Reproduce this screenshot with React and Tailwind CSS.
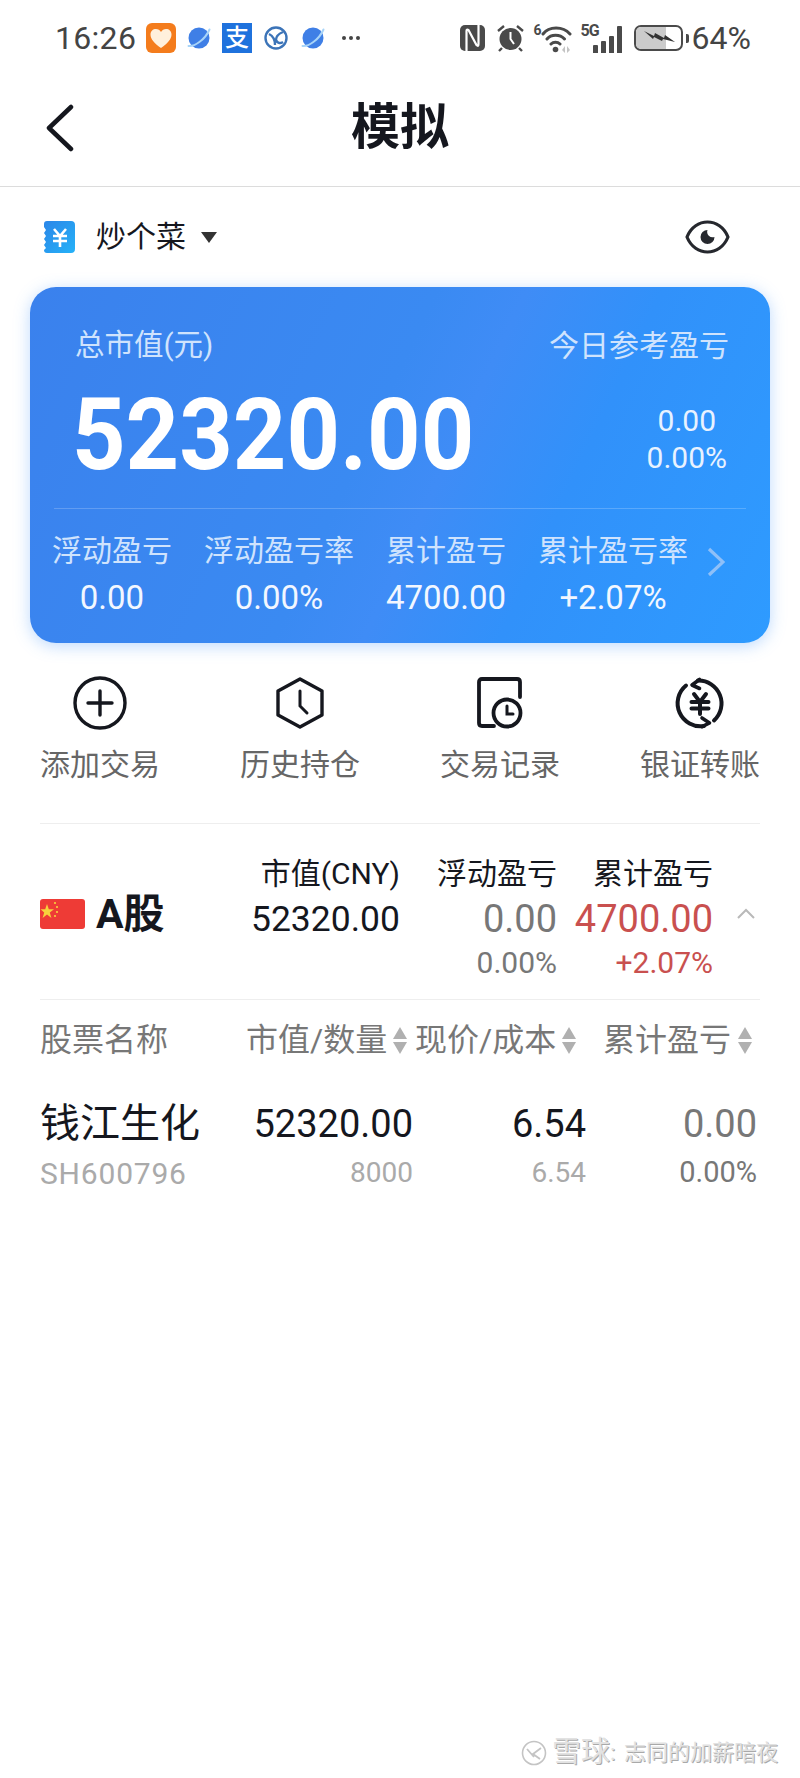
// App.jsx — simulated portfolio screen (模拟)
const INK = '#15171e'

function HeartApp() {
  return (
    <svg width="30" height="30" viewBox="0 0 30 30" className="ml-[10px]">
      <rect width="30" height="30" rx="6" fill="#f47c1c" />
      <path d="M15 25 C8 20 4.5 16 4.5 11.5 C4.5 8 7 6 10 6 C12 6 14 7 15 9 C16 7 18 6 20 6 C23 6 25.5 8 25.5 11.5 C25.5 16 22 20 15 25 Z" fill="#fff0dc" />
    </svg>
  )
}

function Planet({ className }) {
  return (
    <svg width="24" height="24" viewBox="0 0 24 24" className={className}>
      <circle cx="12" cy="12" r="10.5" fill="#3f7fe6" />
      <path d="M1.5 20 C7 21 18 14 22.5 3.5" stroke="#a8d4f8" strokeWidth="2" fill="none" strokeLinecap="round" />
    </svg>
  )
}

function Alipay() {
  return (
    <div className="ml-[11px] flex h-[30px] w-[30px] items-center justify-center bg-[#1f72dd] text-[24px] leading-none font-medium text-white">支</div>
  )
}

function RingLogo() {
  return (
    <svg width="26" height="26" viewBox="0 0 26 26" className="ml-[11px]">
      <circle cx="13" cy="13" r="10.5" fill="none" stroke="#3c74b8" strokeWidth="2.4" />
      <path d="M6 9 C10 11 12 15 12 20 M20 7 C15 9 13 12 13 15 C14 18 17 19 20 17" fill="none" stroke="#3c74b8" strokeWidth="2.4" />
    </svg>
  )
}

function StatusRight() {
  return (
    <div className="flex items-center">
      {/* nfc */}
      <svg width="25" height="26" viewBox="0 0 25 26">
        <rect width="25" height="26" rx="5" fill="#4a4a4a" />
        <path d="M6.5 26 V6 Q6.5 4 8.5 5 L16.5 20 Q18.5 22 18.5 19 V0" fill="none" stroke="#fff" strokeWidth="2.2" />
      </svg>
      {/* alarm */}
      <svg width="29" height="28" viewBox="0 0 29 28" className="ml-[11px]">
        <circle cx="14.5" cy="15" r="11" fill="#4a4a4a" />
        <path d="M14.5 8 V15 L18 20" stroke="#fff" strokeWidth="2" fill="none" />
        <path d="M2 7 L8 2 M27 7 L21 2 M6 24 L3 27 M23 24 L26 27" stroke="#4a4a4a" strokeWidth="2.4" />
      </svg>
      {/* wifi */}
      <div className="relative ml-[9px] h-[30px] w-[38px]">
        <span className="absolute top-0 left-0 text-[14px] leading-[14px] font-bold text-[#4a4a4a]">6</span>
        <svg width="38" height="30" viewBox="0 0 38 30">
          <path d="M9 11 C15 3 29 3 36 11 M13 16 C17 11 26 11 30.5 16 M17 21 C19.5 18.5 23.5 18.5 26 21" fill="none" stroke="#4a4a4a" strokeWidth="3" strokeLinecap="round" />
          <circle cx="21.5" cy="26.5" r="2.8" fill="#4a4a4a" />
          <path d="M28 27 L31 23 V30 Z M33 23 L36 27 L33 30 Z" fill="#c4c4c4" />
        </svg>
      </div>
      {/* 5g + signal */}
      <div className="relative ml-[9px] h-[30px] w-[41px]">
        <span className="absolute top-0 left-0 text-[16px] leading-[16px] font-bold tracking-[-1px] text-[#4a4a4a]">5G</span>
        <div className="absolute right-0 bottom-0 flex items-end gap-[3px]">
          <div className="h-[8px] w-[5px] rounded-t-[1px] bg-[#4a4a4a]" />
          <div className="h-[12px] w-[5px] rounded-t-[1px] bg-[#4a4a4a]" />
          <div className="h-[17px] w-[5px] rounded-t-[1px] bg-[#4a4a4a]" />
          <div className="h-[27px] w-[5px] rounded-t-[1px] bg-[#4a4a4a]" />
        </div>
      </div>
      {/* battery */}
      <div className="relative ml-[12px] h-[26px] w-[49px] overflow-hidden rounded-[7px] border-[2.5px] border-[#4a4a4a]">
        <div className="h-full w-[30px] bg-[#cbcbcb]" />
        <svg width="34" height="14" viewBox="0 0 34 14" className="absolute top-[3px] left-[6px]">
          <path d="M2 1 L12 6 L13 3 L22 8 L23 5 L33 12 L21 9 L20 11 L12 7 L11 9 Z" fill="#333" />
        </svg>
      </div>
      <div className="ml-[3px] h-[9px] w-[3px] rounded-r-[2px] bg-[#4a4a4a]" />
      <span className="ml-[3px] text-[32px] leading-none text-[#444]">64%</span>
    </div>
  )
}

function StatusBar() {
  return (
    <div className="flex h-[76px] items-center justify-between pr-[49px] pl-[55px]">
      <div className="flex items-center">
        <span className="w-[81px] text-[32px] leading-none tracking-[0.3px] text-[#444]">16:26</span>
        <HeartApp />
        <Planet className="ml-[11px]" />
        <Alipay />
        <RingLogo />
        <Planet className="ml-[12px]" />
        <div className="ml-[17px] flex gap-[3px]">
          <div className="h-[4px] w-[4px] rounded-full bg-[#444]" />
          <div className="h-[4px] w-[4px] rounded-full bg-[#444]" />
          <div className="h-[4px] w-[4px] rounded-full bg-[#444]" />
        </div>
      </div>
      <StatusRight />
    </div>
  )
}

function Header() {
  return (
    <div className="grid h-[111px] grid-cols-3 items-center border-b border-[#dcdcdc] px-[45px] pb-[7px]">
      <svg width="30" height="48" viewBox="0 0 30 48">
        <path d="M26 3 L4 24 L26 45" fill="none" stroke={INK} strokeWidth="4.5" strokeLinecap="round" strokeLinejoin="round" />
      </svg>
      <div className="text-center text-[49px] leading-none font-bold text-[#15171e]">模拟</div>
    </div>
  )
}

function AccountRow() {
  return (
    <div className="flex h-[100px] items-center justify-between pr-[70px] pl-[43px]">
      <div className="flex items-center">
        <svg width="32" height="32" viewBox="0 0 32 32">
          <defs>
            <linearGradient id="acct" x1="0" y1="0" x2="1" y2="1">
              <stop offset="0" stopColor="#2b86e8" />
              <stop offset="1" stopColor="#25b2f8" />
            </linearGradient>
          </defs>
          <path d="M4 0 H28 Q32 0 32 4 V28 Q32 32 28 32 H4 Q1 32 1 29 L3 27 L1 24 L3 21 L1 18 L3 15 L1 12 L3 9 L1 6 V3 Q1 0 4 0 Z" fill="url(#acct)" />
          <path d="M11 8 L17 15 L23 8 M10 15 H24 M10 20 H24 M17 15 V26" fill="none" stroke="#fff" strokeWidth="2.6" />
        </svg>
        <span className="ml-[21px] text-[30px] leading-none text-[#15171e]">炒个菜</span>
        <div className="ml-[15px] h-0 w-0 border-x-[8px] border-t-[11px] border-x-transparent border-t-[#333]" />
      </div>
      <svg width="45" height="34" viewBox="0 0 45 34">
        <path d="M2 17 C10 -3 35 -3 43 17 C35 37 10 37 2 17 Z" fill="none" stroke="#26282e" strokeWidth="3.2" strokeLinejoin="round" />
        <path d="M22.5 10 A7 7 0 1 0 29.5 17 A5.5 5.5 0 0 1 22.5 10 Z" fill="#26282e" />
      </svg>
    </div>
  )
}

const SUMMARY = [
  { label: '浮动盈亏', value: '0.00', w: 'w-[120px]' },
  { label: '浮动盈亏率', value: '0.00%', w: 'w-[150px]' },
  { label: '累计盈亏', value: '4700.00', w: 'w-[120px]' },
  { label: '累计盈亏率', value: '+2.07%', w: 'w-[150px]' },
]

function Card() {
  return (
    <div className="mx-[30px] h-[356px] rounded-[26px] bg-[linear-gradient(115deg,#3a81ed_0%,#3a8af2_45%,#3f8cf6_55%,#3191fa_70%,#2e9bff_100%)] pt-[44px] shadow-[0_3px_16px_rgba(70,150,250,0.35)]">
      <div className="flex h-[30px] items-center justify-between pr-[41px] pl-[45px] text-[29.5px] leading-none text-[#cfe3fd]">
        <span>总市值(元)</span>
        <span className="text-[30px]">今日参考盈亏</span>
      </div>
      <div className="mt-[21px] flex h-[100px] items-center justify-between pr-[43px] pl-[42px]">
        {/* hero digits are a narrow face in the picture, so squeeze Roboto */}
        <span className="mt-[4px] inline-block origin-left scale-x-[0.925] text-[101px] leading-none font-bold text-white">52320.00</span>
        <div className="flex flex-col items-center gap-[10px] pt-[14px] text-[30px] leading-[27px] text-[#e8f2ff]">
          <span>0.00</span>
          <span>0.00%</span>
        </div>
      </div>
      <div className="mx-[24px] mt-[26px] h-px bg-white/20" />
      <div className="mt-[27px] flex items-start pl-[22px]">
        <div className="flex gap-[32px]">
          {SUMMARY.map(s => (
            <div key={s.label} className={`${s.w} flex flex-col items-center`}>
              <span className="text-[30px] leading-[30px] whitespace-nowrap text-[#cfe3fd]">{s.label}</span>
              <span className="mt-[15px] text-[33px] leading-[34px] text-[#f2f7ff]">{s.value}</span>
            </div>
          ))}
        </div>
        <svg width="18" height="30" viewBox="0 0 18 30" className="mt-[11px] ml-[19px]">
          <path d="M2 2 L16 15 L2 28" fill="none" stroke="#8fc0f8" strokeWidth="3.2" />
        </svg>
      </div>
    </div>
  )
}

function PlusIcon() {
  return (
    <svg width="54" height="54" viewBox="0 0 54 54">
      <circle cx="27" cy="27" r="25" fill="none" stroke={INK} strokeWidth="3.4" />
      <path d="M27 15 V39 M15 27 H39" stroke={INK} strokeWidth="3.4" strokeLinecap="round" />
    </svg>
  )
}

function HexClockIcon() {
  return (
    <svg width="54" height="54" viewBox="0 0 54 54">
      <path d="M27 3 L49 15 V39 L27 51 L5 39 V15 Z" fill="none" stroke={INK} strokeWidth="3.4" strokeLinejoin="round" />
      <path d="M27 15 V30 L34 37" fill="none" stroke={INK} strokeWidth="3" strokeLinecap="round" />
    </svg>
  )
}

function RecordIcon() {
  return (
    <svg width="54" height="54" viewBox="0 0 54 54">
      <path d="M21 50 H9 Q6 50 6 47 V6 Q6 3 9 3 H44 Q47 3 47 6 V21" fill="none" stroke={INK} strokeWidth="3.8" strokeLinecap="round" />
      <circle cx="34" cy="37" r="13.5" fill="none" stroke={INK} strokeWidth="3.8" />
      <path d="M34 30 V38 H40" fill="none" stroke={INK} strokeWidth="3" strokeLinecap="round" />
    </svg>
  )
}

function TransferIcon() {
  return (
    <svg width="54" height="54" viewBox="0 0 54 54">
      <path d="M25 4.5 A23 23 0 0 1 41 44.5 M13 9.5 A23 23 0 0 0 31 50" fill="none" stroke={INK} strokeWidth="4" strokeLinecap="round" />
      <path d="M26.5 3.5 L19 9 L26.5 12.5 M29 42 L36.5 47 L29 50.7" fill="none" stroke={INK} strokeWidth="3.6" strokeLinecap="round" strokeLinejoin="round" />
      <path d="M21 18 L27 26 L33 18 M18.5 26 H35.5 M18.5 32.5 H35.5 M27 26 V38" fill="none" stroke={INK} strokeWidth="4" strokeLinecap="round" />
    </svg>
  )
}

const ACTIONS = [
  { label: '添加交易', Icon: PlusIcon },
  { label: '历史持仓', Icon: HexClockIcon },
  { label: '交易记录', Icon: RecordIcon },
  { label: '银证转账', Icon: TransferIcon },
]

function Actions() {
  return (
    <div className="mx-[40px] mt-[33px] flex h-[148px] justify-between border-b border-[#eeeeee]">
      {ACTIONS.map(({ label, Icon }) => (
        <div key={label} className="flex w-[120px] flex-col items-center">
          <Icon />
          <span className="mt-[18px] text-[30px] leading-[34px] text-[#666]">{label}</span>
        </div>
      ))}
    </div>
  )
}

function Flag() {
  return (
    <svg width="45" height="30" viewBox="0 0 45 30">
      <rect width="45" height="30" rx="3" fill="#ee3b36" />
      <path d="M7 5 L8.8 10.3 L14 10.3 L9.8 13.5 L11.4 19 L7 15.6 L2.6 19 L4.2 13.5 L0.5 10.3 L5.2 10.3 Z" fill="#f7d13c" />
      <circle cx="15" cy="4" r="1.1" fill="#f7d13c" />
      <circle cx="17" cy="8" r="1.1" fill="#f7d13c" />
      <circle cx="17" cy="13" r="1.1" fill="#f7d13c" />
      <circle cx="15" cy="17" r="1.1" fill="#f7d13c" />
    </svg>
  )
}

function MarketRow() {
  return (
    <div className="mx-[40px] flex h-[176px] border-b border-[#eeeeee] pt-[33px]">
      <div className="flex h-[110px] w-[160px] items-center pt-[4px]">
        <Flag />
        <span className="ml-[11px] text-[41px] leading-none font-bold whitespace-nowrap text-[#15171e]">A股</span>
      </div>
      <div className="flex w-[200px] flex-col items-end">
        <span className="text-[30px] leading-[34px] text-[#15171e]">市值(CNY)</span>
        <span className="mt-[9px] text-[35.5px] leading-[38px] font-[450] text-[#15171e]">52320.00</span>
      </div>
      <div className="flex w-[157px] flex-col items-end">
        <span className="text-[30px] leading-[34px] text-[#15171e]">浮动盈亏</span>
        <span className="mt-[8px] text-[38px] leading-[40px] font-[450] text-[#777]">0.00</span>
        <span className="mt-[9px] text-[30px] leading-[30px] text-[#777]">0.00%</span>
      </div>
      <div className="flex w-[156px] flex-col items-end">
        <span className="text-[30px] leading-[34px] text-[#15171e]">累计盈亏</span>
        <span className="mt-[8px] text-[38px] leading-[40px] font-[450] text-[#c9504f]">4700.00</span>
        <span className="mt-[9px] text-[30px] leading-[30px] text-[#c9504f]">+2.07%</span>
      </div>
      <svg width="18" height="11" viewBox="0 0 18 11" className="mt-[51px] ml-[24px]">
        <path d="M1 10 L9 2 L17 10" fill="none" stroke="#b9b9b9" strokeWidth="2" />
      </svg>
    </div>
  )
}

function SortArrows() {
  return (
    <div className="ml-[5px] flex flex-col gap-[3px]">
      <div className="h-0 w-0 border-x-[7px] border-b-[12px] border-x-transparent border-b-[#b0b0b0]" />
      <div className="h-0 w-0 border-x-[7px] border-t-[12px] border-x-transparent border-t-[#b0b0b0]" />
    </div>
  )
}

function TableHead() {
  return (
    <div className="mt-[24px] flex h-[32px] items-center pl-[40px] text-[32px] leading-none text-[#777]">
      <span className="w-[206px]">股票名称</span>
      <span className="w-[142px] whitespace-nowrap">市值/数量</span>
      <SortArrows />
      <span className="ml-[8px] w-[142px] whitespace-nowrap">现价/成本</span>
      <SortArrows />
      <span className="ml-[27px] w-[130px] text-[32px]">累计盈亏</span>
      <SortArrows />
    </div>
  )
}

function StockRow() {
  return (
    <div className="mt-[47px] flex pl-[40px]">
      <div className="flex w-[172px] flex-col">
        <span className="text-[40px] leading-[42px] text-[#15171e]">钱江生化</span>
        <span className="mt-[14px] text-[30px] leading-[30px] tracking-[0.8px] whitespace-nowrap text-[#aaa]">SH600796</span>
      </div>
      <div className="flex w-[201px] flex-col items-end">
        <span className="text-[38px] leading-[42px] font-[450] text-[#15171e]">52320.00</span>
        <span className="mt-[13px] text-[28px] leading-[30px] text-[#aaa]">8000</span>
      </div>
      <div className="flex w-[173px] flex-col items-end">
        <span className="text-[38px] leading-[42px] font-[450] text-[#15171e]">6.54</span>
        <span className="mt-[13px] text-[28px] leading-[30px] text-[#aaa]">6.54</span>
      </div>
      <div className="flex w-[171px] flex-col items-end">
        <span className="text-[38px] leading-[42px] font-[450] text-[#777]">0.00</span>
        <span className="mt-[12px] text-[29px] leading-[30px] text-[#777]">0.00%</span>
      </div>
    </div>
  )
}

function Watermark() {
  return (
    <div className="absolute right-[22px] bottom-[11px] flex items-center text-[#e2e2e2] [text-shadow:1px_1px_0_#a9a9a9]">
      <svg width="26" height="26" viewBox="0 0 26 26" className="mr-[5px]">
        <circle cx="13" cy="13" r="11.5" fill="none" stroke="#c4c4c4" strokeWidth="1.6" />
        <path d="M6 9 L13 17 M20 8 L12 14 L19 19" fill="none" stroke="#c4c4c4" strokeWidth="1.8" />
      </svg>
      <span className="text-[29px] leading-none">雪球</span>
      <span className="w-[14px] text-[22px] leading-none">:</span>
      <span className="text-[22px] leading-none">志同的加薪暗夜</span>
    </div>
  )
}

export default function App() {
  return (
    <div className="relative h-[1778px] w-[800px] overflow-hidden bg-white font-['Roboto','Noto_Sans_CJK_SC',sans-serif]">
      <StatusBar />
      <Header />
      <AccountRow />
      <Card />
      <Actions />
      <MarketRow />
      <TableHead />
      <StockRow />
      <Watermark />
    </div>
  )
}
